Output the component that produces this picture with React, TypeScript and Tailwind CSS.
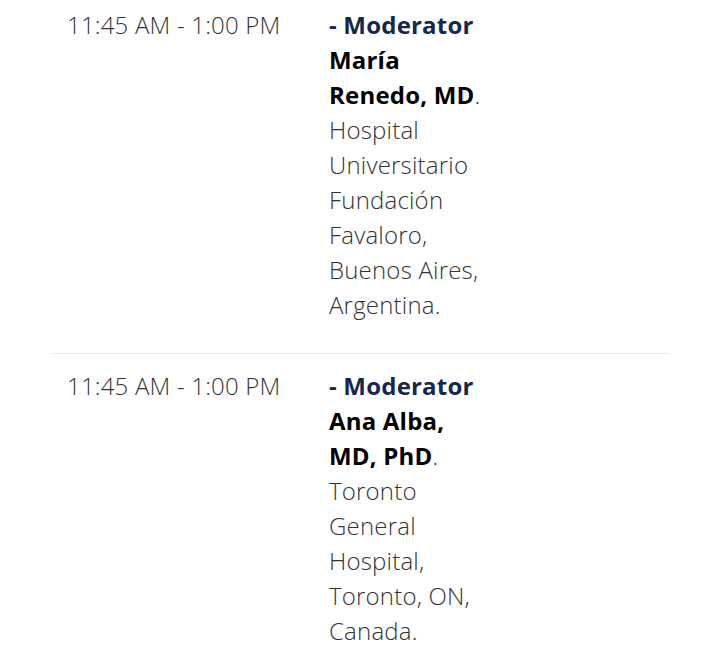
const sessions = [
  {
    time: "11:45 AM - 1:00 PM",
    role: "- Moderator",
    name: "María Renedo, MD",
    place: "Hospital Universitario Fundación Favaloro, Buenos Aires, Argentina.",
  },
  {
    time: "11:45 AM - 1:00 PM",
    role: "- Moderator",
    name: "Ana Alba, MD, PhD",
    place: "Toronto General Hospital, Toronto, ON, Canada.",
  },
];

export default function App() {
  return (
    <div className="min-h-screen bg-white font-['Open_Sans',sans-serif] text-[24px] leading-[35px] tracking-[0.2px]">
      <div className="ml-[53px] w-[616px]">
        {sessions.map((s, i) => (
          <div
            key={i}
            className={`flex pl-[14px] pb-[31px] ${i === 0 ? "pt-[7px] border-b border-[#e6e6e6]" : "pt-[14px]"}`}
          >
            <div className="w-[262px] shrink-0 font-light text-[#333]">{s.time}</div>
            <div className="w-[164px] font-light text-[#333]">
              <div className="font-bold text-[#14284b]">{s.role}</div>
              <div>
                <span className="font-bold text-black">{s.name}</span>.
              </div>
              <div>{s.place}</div>
            </div>
          </div>
        ))}
      </div>
    </div>
  );
}
